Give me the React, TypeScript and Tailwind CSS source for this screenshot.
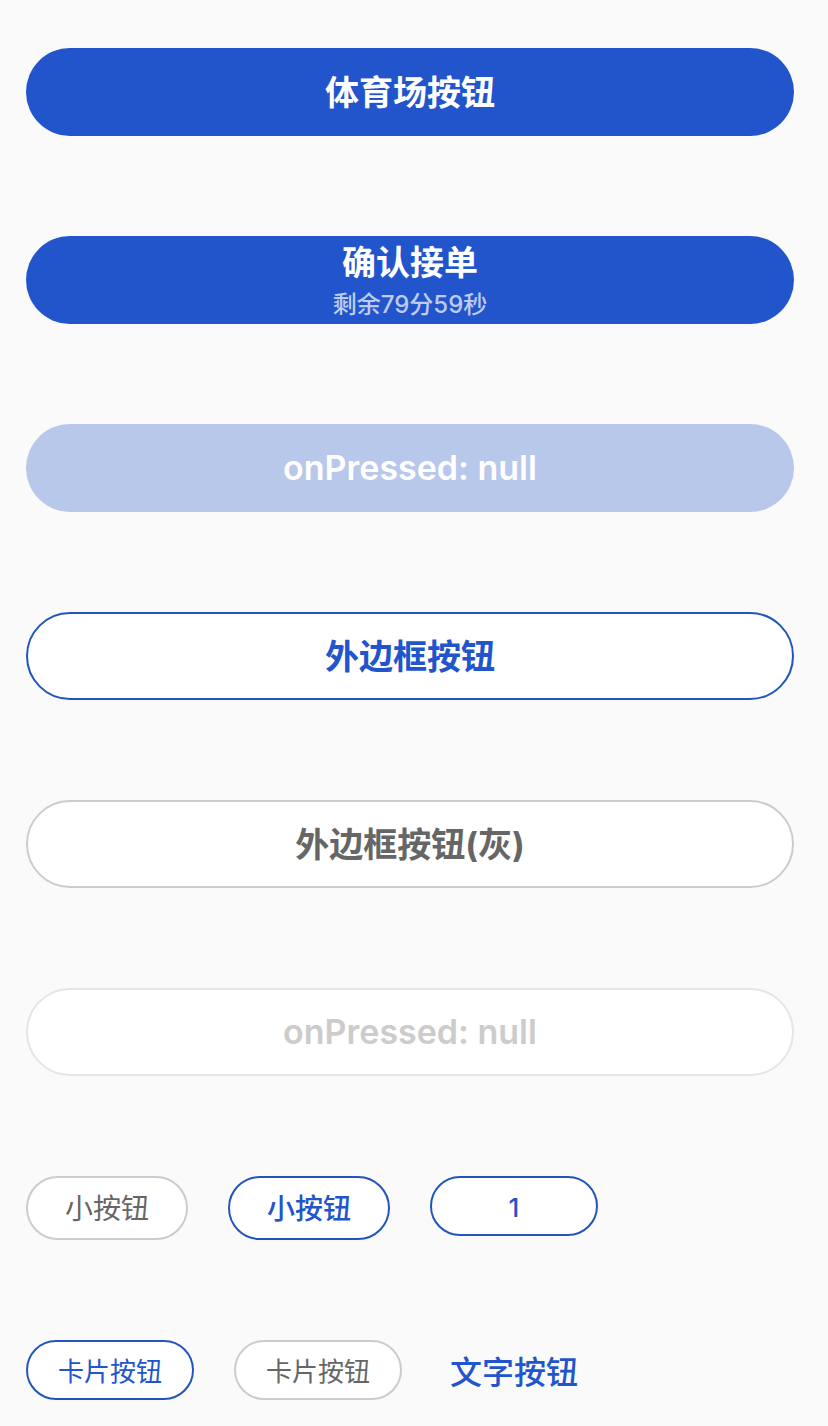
import type { ReactNode } from "react";

type Props = { children: ReactNode; className: string; disabled?: boolean };

function StadiumButton({ children, className, disabled }: Props) {
  return (
    <button
      type="button"
      disabled={disabled}
      className={`flex h-[88px] w-full flex-col items-center justify-center rounded-full text-[34px] leading-[48px] ${className}`}
    >
      {children}
    </button>
  );
}

function PillButton({ children, className }: Props) {
  return (
    <button type="button" className={`flex items-center justify-center rounded-full border-2 bg-white pt-0.5 ${className}`}>
      {children}
    </button>
  );
}

export default function App() {
  return (
    <main className="flex flex-col gap-[100px] bg-[#fafafa] pt-12 pr-[34px] pb-[22px] pl-[26px] font-['Inter','Noto_Sans_CJK_SC',sans-serif]">
      <StadiumButton className="bg-[#2255cc] pt-0.5 font-bold text-white">体育场按钮</StadiumButton>
      <StadiumButton className="bg-[#2255cc] pt-0.5 font-bold text-white">
        <span>确认接单</span>
        <span className="text-2xl leading-9 font-medium text-[#bdccf0]">剩余79分59秒</span>
      </StadiumButton>
      <StadiumButton disabled className="bg-[#b8c8eb] font-semibold text-white">onPressed: null</StadiumButton>
      <StadiumButton className="border-2 border-[#2255bb] bg-white pt-0.5 font-bold text-[#2255cc]">外边框按钮</StadiumButton>
      <StadiumButton className="border-2 border-[#cccccc] bg-white pt-0.5 font-bold text-[#666666]">外边框按钮(灰)</StadiumButton>
      <StadiumButton disabled className="border-2 border-[#e5e5e5] bg-white font-semibold text-[#cccccc]">onPressed: null</StadiumButton>
      <div className="flex flex-wrap items-start gap-10">
        <PillButton className="h-16 w-[162px] border-[#cccccc] text-[28px] text-[#666666]">小按钮</PillButton>
        <PillButton className="h-16 w-[162px] border-[#2255bb] text-[28px] font-medium text-[#2255cc]">小按钮</PillButton>
        <PillButton className="h-[60px] w-[168px] border-[#2255bb] text-[26px] font-medium text-[#2255cc]">1</PillButton>
      </div>
      <div className="flex flex-wrap items-start gap-10">
        <PillButton className="h-[60px] w-[168px] border-[#2255bb] text-[26px] text-[#2255cc]">卡片按钮</PillButton>
        <PillButton className="h-[60px] w-[168px] border-[#cccccc] text-[26px] text-[#666666]">卡片按钮</PillButton>
        <button type="button" className="ml-2 text-[32px] leading-[66px] font-medium text-[#2255cc]">文字按钮</button>
      </div>
    </main>
  );
}
